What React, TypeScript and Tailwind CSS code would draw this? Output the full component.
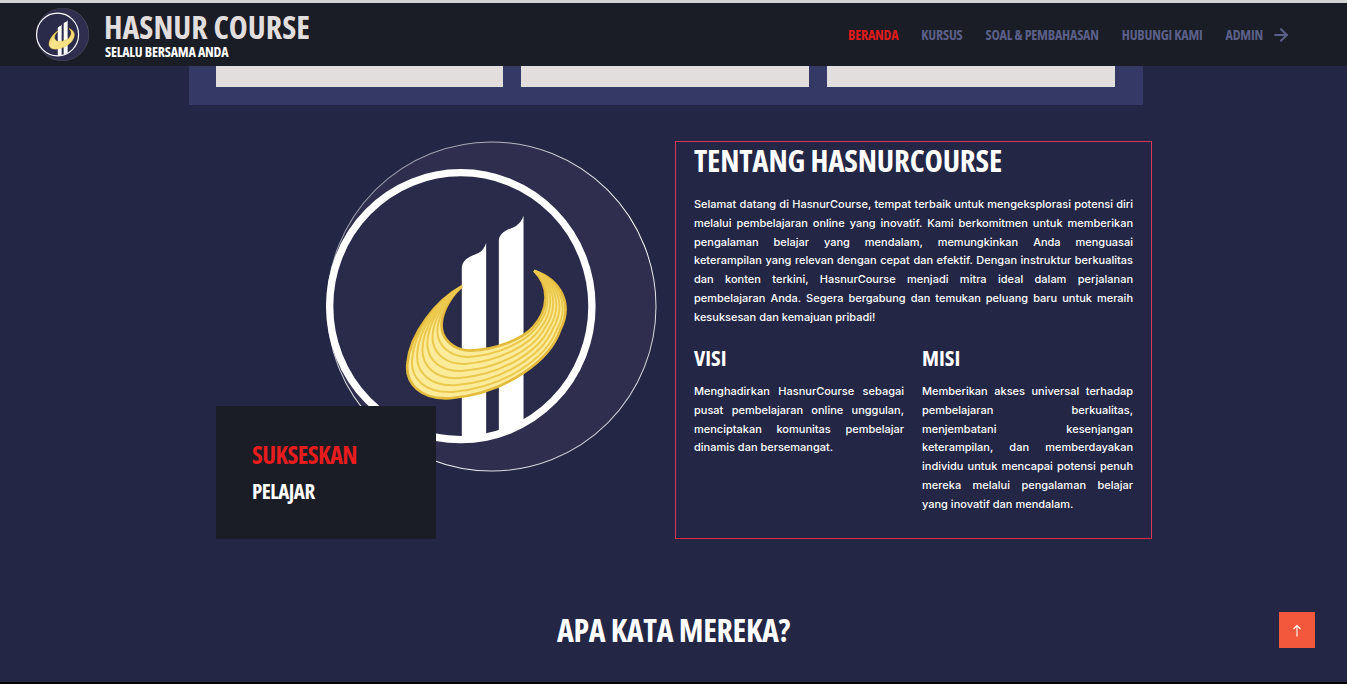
import { useId } from "react";
import { ArrowRight } from "lucide-react";

const heading = "font-['Open_Sans',sans-serif] font-bold [font-stretch:75%]";
const body = "font-['Inter','Open_Sans',sans-serif]";

const about = [
  "Selamat datang di HasnurCourse, tempat terbaik untuk mengeksplorasi potensi diri",
  "melalui pembelajaran online yang inovatif. Kami berkomitmen untuk memberikan",
  "pengalaman belajar yang mendalam, memungkinkan Anda menguasai",
  "keterampilan yang relevan dengan cepat dan efektif. Dengan instruktur berkualitas",
  "dan konten terkini, HasnurCourse menjadi mitra ideal dalam perjalanan",
  "pembelajaran Anda. Segera bergabung dan temukan peluang baru untuk meraih",
  "kesuksesan dan kemajuan pribadi!",
];
const visi = [
  "Menghadirkan HasnurCourse sebagai",
  "pusat pembelajaran online unggulan,",
  "menciptakan komunitas pembelajar",
  "dinamis dan bersemangat.",
];
const misi = [
  "Memberikan akses universal terhadap",
  "pembelajaran berkualitas,",
  "menjembatani kesenjangan",
  "keterampilan, dan memberdayakan",
  "individu untuk mencapai potensi penuh",
  "mereka melalui pengalaman belajar",
  "yang inovatif dan mendalam.",
];

// control points of the swoosh, outer edge and inner edge, both from the right tip to the left tip
const outer = [672, 423, 750, 450, 790, 520, 750, 600, 720, 690, 590, 790, 420, 805, 330, 810, 285, 760, 292, 700, 300, 610, 380, 510, 455, 470];
const inner = [672, 423, 720, 470, 715, 540, 670, 590, 640, 625, 560, 660, 480, 662, 440, 662, 410, 640, 398, 610, 385, 570, 410, 510, 455, 470];

function curve(t: number) {
  const p = outer.map((v, i) => Math.round(v + (inner[i] - v) * t));
  return `M${p[0]} ${p[1]} C${p.slice(2).join(" ")}`;
}

function Logo({ className }: { className: string }) {
  const id = useId();
  const back: number[] = [];
  for (let i = inner.length - 4; i >= 0; i -= 2) back.push(inner[i], inner[i + 1]);
  const swoosh = `${curve(0)} C${back.join(" ")} Z`;
  return (
    <svg viewBox="48 35 992 990" className={className}>
      <defs>
        <linearGradient id={`${id}e`} x1="0" y1="0" x2="1" y2="1">
          <stop offset="0" stopColor="#77778f" />
          <stop offset="0.6" stopColor="#ffffff" />
          <stop offset="1" stopColor="#a9a9ba" />
        </linearGradient>
        <clipPath id={`${id}r`}>
          <ellipse cx="452" cy="529" rx="390" ry="397" />
        </clipPath>
        <filter id={`${id}b`} x="-5%" y="-5%" width="110%" height="110%">
          <feGaussianBlur stdDeviation="1.5" />
        </filter>
      </defs>
      <circle cx="544" cy="530" r="493" fill="#2f2e4e" stroke={`url(#${id}e)`} strokeWidth="3" />
      <g filter={`url(#${id}b)`}>
        <ellipse cx="452" cy="529" rx="393" ry="400" fill="#2a2a4b" stroke="#ffffff" strokeWidth="22" />
        <g clipPath={`url(#${id}r)`} fill="#ffffff">
          <path d="M455 950V412C458 385 488 378 505 370C517 364 524 352 528 340V950Z" />
          <path d="M566 950V330C570 305 598 298 615 290C628 283 636 270 640 258V950Z" />
        </g>
        <path d={swoosh} fill="#fbeb9a" stroke="#e3bb3c" strokeWidth="8" />
        {[0.13, 0.27, 0.42, 0.57, 0.72, 0.87].map((t) => (
          <path key={t} d={curve(t)} fill="none" stroke="#ecc94e" strokeWidth="6" />
        ))}
      </g>
    </svg>
  );
}

function Lines({ lines }: { lines: string[] }) {
  return (
    <div className={`${body} text-[11px] font-medium leading-[18.8px] text-white`}>
      {lines.map((line, i) => (
        <p key={line} className={i === lines.length - 1 ? "whitespace-nowrap" : "whitespace-nowrap [text-align:justify] [text-align-last:justify]"}>
          {line}
        </p>
      ))}
    </div>
  );
}

export default function App() {
  const links = ["KURSUS", "SOAL & PEMBAHASAN", "HUBUNGI KAMI"];
  return (
    <div className="flex h-[684px] flex-col overflow-hidden border-b-2 border-black bg-[#232645]">
      <header className="flex h-[66px] shrink-0 items-center justify-between border-t-[3px] border-[#d4d4d4] bg-[#1a1c26] pl-9 pr-14">
        <div className="flex items-center">
          <Logo className="h-[53px] w-[53px]" />
          <div className="ml-[15px] -mt-px">
            <div className={`${heading} text-[32px] leading-[34px] text-[#e1dedd]`}>HASNUR COURSE</div>
            <div className={`${heading} ml-px text-[14px] leading-[15px] tracking-[-0.2px] text-white`}>SELALU BERSAMA ANDA</div>
          </div>
        </div>
        <nav className={`${heading} flex items-center gap-[23px] text-[14px] tracking-[-0.2px] text-[#5b6088]`}>
          <a className="text-[#e01a1a]">BERANDA</a>
          {links.map((link) => (
            <a key={link}>{link}</a>
          ))}
          <a className="flex items-center gap-2">
            ADMIN
            <ArrowRight className="h-5 w-5" strokeWidth={2.5} />
          </a>
        </nav>
      </header>

      <section className="ml-[189px] w-[954px] shrink-0 bg-[#343965] pb-[18px] pl-[27px]">
        <div className="grid grid-cols-[287px_288px_288px] gap-[18px]">
          <div className="h-[21px] bg-[#e1dedd]" />
          <div className="h-[21px] bg-[#e1dedd]" />
          <div className="h-[21px] bg-[#e1dedd]" />
        </div>
      </section>

      <section className="ml-[216px] mt-9 flex shrink-0">
        <div className="relative h-[398px] w-[459px]">
          <Logo className="ml-[110px] h-[331px] w-[331px]" />
          <div className="absolute bottom-0 left-0 h-[133px] w-[220px] bg-[#1a1c26] pl-9 pt-[33px]">
            <div className={`${heading} text-[24.5px] leading-[32px] tracking-[-0.5px] text-[#e81c1c]`}>SUKSESKAN</div>
            <div className={`${heading} mt-[6px] text-[21px] leading-[28px] tracking-[-0.5px] text-white`}>PELAJAR</div>
          </div>
        </div>
        <div className="h-[398px] w-[477px] border border-[#d9365a] border-b-[#e82a3f] px-[18px]">
          <h2 className={`${heading} whitespace-nowrap text-[31px] leading-[36px] tracking-[-0.2px] text-white`}>TENTANG HASNURCOURSE</h2>
          <div className="mt-[17px]">
            <Lines lines={about} />
          </div>
          <div className="mt-[17px] grid grid-cols-[210px_211px] gap-[18px]">
            <div>
              <h3 className={`${heading} text-[22px] leading-[26px] text-white`}>VISI</h3>
              <div className="mt-[12.5px]">
                <Lines lines={visi} />
              </div>
            </div>
            <div>
              <h3 className={`${heading} text-[22px] leading-[26px] text-white`}>MISI</h3>
              <div className="mt-[12.5px]">
                <Lines lines={misi} />
              </div>
            </div>
          </div>
        </div>
      </section>

      <h2 className={`${heading} mt-[69px] text-center text-[32px] leading-[44px] tracking-[-0.3px] text-white`}>APA KATA MEREKA?</h2>

      <button className="fixed bottom-9 right-8 flex h-9 w-9 items-center justify-center bg-[#f4583c]">
        <svg viewBox="0 0 10 13" className="h-[13px] w-[10px]" fill="none" stroke="#ffffff" strokeWidth="1.1">
          <path d="M5 1.5V12.5M1.5 5L5 1.5L8.5 5" />
        </svg>
      </button>
    </div>
  );
}
